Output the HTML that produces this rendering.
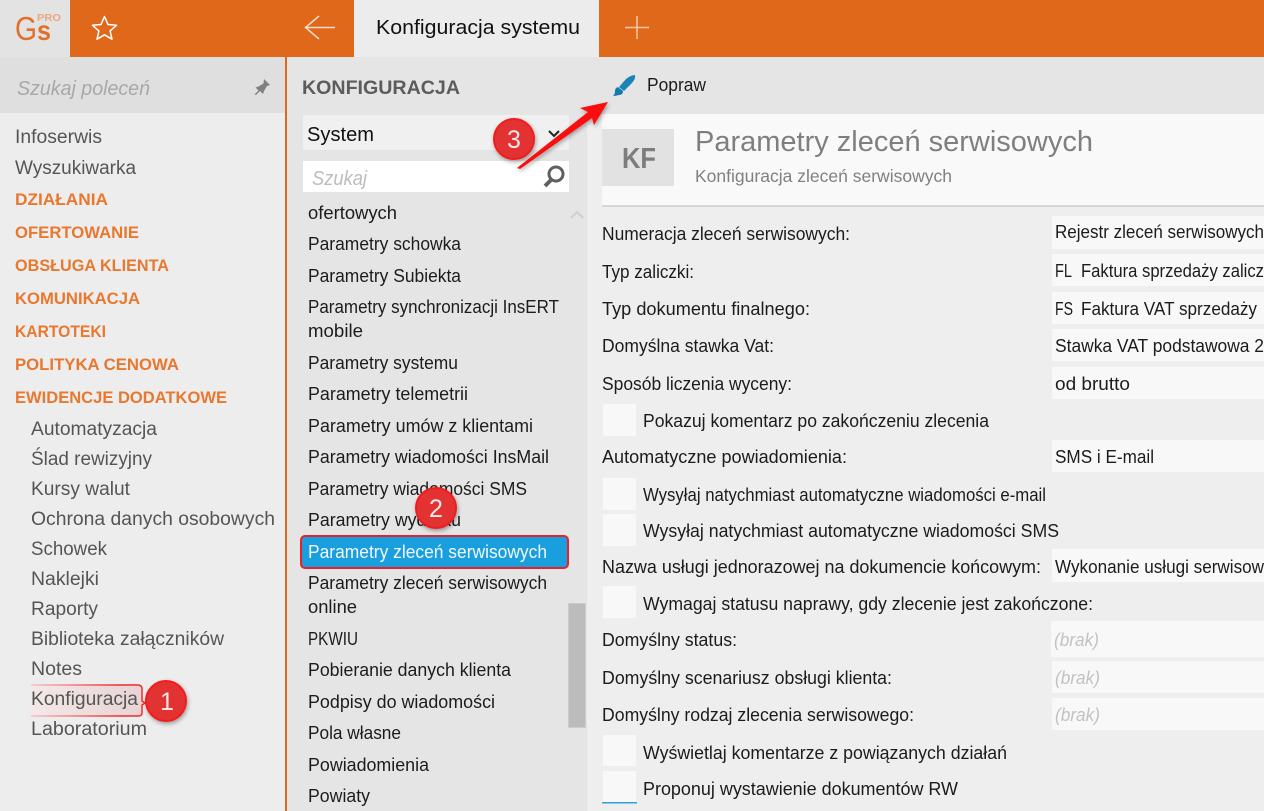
<!DOCTYPE html>
<html lang="pl"><head><meta charset="utf-8"><title>Konfiguracja systemu</title>
<style>
html,body{margin:0;padding:0;width:1264px;height:811px;overflow:hidden;background:#eee}
svg{display:block}
text{font-family:"Liberation Sans",sans-serif;font-size:18px;fill:#1a1a1a;white-space:pre}
.n{fill:#555;font-size:19px}
.o{fill:#e9782f;font-weight:bold;font-size:17px}
.m{fill:#1c1c1c}
.g{fill:#c2c2c2;font-style:italic}
</style></head><body>
<svg width="1264" height="811" viewBox="0 0 1264 811" xmlns="http://www.w3.org/2000/svg">
<defs>
<filter id="sh" x="-30%" y="-30%" width="160%" height="160%"><feDropShadow dx="1" dy="2" stdDeviation="2" flood-color="#000" flood-opacity=".35"/></filter>
<linearGradient id="hl" x1="0" x2="1" y1="0" y2="0"><stop offset="0" stop-color="#f4e8e8"/><stop offset="1" stop-color="#e8d3d3"/></linearGradient>
<linearGradient id="hs" gradientUnits="userSpaceOnUse" x1="31" x2="120" y1="0" y2="0"><stop offset="0" stop-color="#f6c4c4"/><stop offset="1" stop-color="#f02b2b"/></linearGradient>
</defs>
<rect width="1264" height="811" fill="#eeeeee"/>
<!-- top bar -->
<rect width="70" height="57" fill="#e3e3e3"/>
<rect x="70" width="284" height="57" fill="#e0681a"/>
<rect x="354" width="245" height="57" fill="#ececec"/>
<rect x="599" width="665" height="57" fill="#e0681a"/>
<text x="15" y="40" style="font-size:33px;fill:#e0702a" textLength="22" lengthAdjust="spacingAndGlyphs">G</text>
<text x="37" y="40" style="font-size:28px;font-weight:bold;fill:#e0702a" textLength="14" lengthAdjust="spacingAndGlyphs">s</text>
<text x="37" y="21" style="font-size:10.500px;fill:#eba77f;font-weight:bold" textLength="24" lengthAdjust="spacingAndGlyphs">PRO</text>
<path d="M104.500 16.500l3.500 8 8.500.8-6.400 5.600 1.900 8.300-7.500-4.400-7.500 4.400 1.900-8.300-6.400-5.600 8.500-.8z" fill="none" stroke="#fff" stroke-width="1.500" stroke-linejoin="round"/>
<path d="M335 27.500H306M319 16l-13.500 11.500L319 39" fill="none" stroke="#f8dcc9" stroke-width="1.500"/>
<path d="M637 16v23M625 27.500h24" stroke="#f6c7a8" stroke-width="1.500" fill="none"/>
<text x="376" y="34" style="font-size:20px;fill:#111" textLength="204" lengthAdjust="spacingAndGlyphs">Konfiguracja systemu</text>
<!-- left sidebar -->
<rect y="57" width="286" height="56" fill="#dfdfdf"/>
<rect y="113" width="286" height="698" fill="#ededed"/>
<rect x="285" y="57" width="2" height="754" fill="#e0681a"/>
<text x="17" y="95" style="font-size:20px;font-style:italic;fill:#a8a8a8" textLength="133" lengthAdjust="spacingAndGlyphs">Szukaj poleceń</text>
<path d="M264 79l6 6-3 1-3 5-1 3-3-3-4 4-1.500-.500 4-4-3-3 3-1 5-3z" fill="#808080"/>
<text class="n" x="15" y="143" textLength="87" lengthAdjust="spacingAndGlyphs">Infoserwis</text>
<text class="n" x="15" y="174" textLength="121" lengthAdjust="spacingAndGlyphs">Wyszukiwarka</text>
<text class="o" x="15" y="205" textLength="93" lengthAdjust="spacingAndGlyphs">DZIAŁANIA</text>
<text class="o" x="15" y="238" textLength="124" lengthAdjust="spacingAndGlyphs">OFERTOWANIE</text>
<text class="o" x="15" y="271" textLength="154" lengthAdjust="spacingAndGlyphs">OBSŁUGA KLIENTA</text>
<text class="o" x="15" y="304" textLength="125" lengthAdjust="spacingAndGlyphs">KOMUNIKACJA</text>
<text class="o" x="15" y="337" textLength="91" lengthAdjust="spacingAndGlyphs">KARTOTEKI</text>
<text class="o" x="15" y="370" textLength="164" lengthAdjust="spacingAndGlyphs">POLITYKA CENOWA</text>
<text class="o" x="15" y="403" textLength="212" lengthAdjust="spacingAndGlyphs">EWIDENCJE DODATKOWE</text>
<text class="n" x="31" y="435" textLength="126" lengthAdjust="spacingAndGlyphs">Automatyzacja</text>
<text class="n" x="31" y="465" textLength="121" lengthAdjust="spacingAndGlyphs">Ślad rewizyjny</text>
<text class="n" x="31" y="495" textLength="99" lengthAdjust="spacingAndGlyphs">Kursy walut</text>
<text class="n" x="31" y="525" textLength="244" lengthAdjust="spacingAndGlyphs">Ochrona danych osobowych</text>
<text class="n" x="31" y="555" textLength="76" lengthAdjust="spacingAndGlyphs">Schowek</text>
<text class="n" x="31" y="585" textLength="68" lengthAdjust="spacingAndGlyphs">Naklejki</text>
<text class="n" x="31" y="615" textLength="67" lengthAdjust="spacingAndGlyphs">Raporty</text>
<text class="n" x="31" y="645" textLength="193" lengthAdjust="spacingAndGlyphs">Biblioteka załączników</text>
<text class="n" x="31" y="675" textLength="51" lengthAdjust="spacingAndGlyphs">Notes</text>
<path d="M31 685H138q4 0 4 4v12l3 2-3 2v8q0 3-4 3H31z" fill="url(#hl)"/>
<path d="M31 685H138q4 0 4 4v12l3 2-3 2v8q0 3-4 3H31" fill="none" stroke="url(#hs)" stroke-width="1.500"/>
<text class="n" x="31" y="705" textLength="107" lengthAdjust="spacingAndGlyphs">Konfiguracja</text>
<text class="n" x="31" y="735" textLength="116" lengthAdjust="spacingAndGlyphs">Laboratorium</text>
<!-- middle panel -->
<rect x="287" y="57" width="300" height="754" fill="#e5e5e5"/>
<text x="302" y="94" style="font-size:19.500px;font-weight:bold;fill:#5c5c5c" textLength="158" lengthAdjust="spacingAndGlyphs">KONFIGURACJA</text>
<rect x="303" y="115" width="266" height="35" fill="#f0f0f0"/>
<text x="307" y="141" style="font-size:20px;fill:#111" textLength="67" lengthAdjust="spacingAndGlyphs">System</text>
<path d="M549 131l5 5 5-5" fill="none" stroke="#222" stroke-width="2"/>
<rect x="303" y="161" width="266" height="31" fill="#fff"/>
<text x="312" y="185" style="font-size:20px;font-style:italic;fill:#bdbdbd" textLength="55" lengthAdjust="spacingAndGlyphs">Szukaj</text>
<circle cx="556" cy="174" r="7" fill="none" stroke="#606060" stroke-width="3"/>
<path d="M551 180l-6 6" stroke="#606060" stroke-width="4"/>
<path d="M571 218l6-6 6 6" fill="none" stroke="#cfcfcf" stroke-width="2"/>
<rect x="568.500" y="603.500" width="17" height="124" fill="#bcbcbc" stroke="#cccccc" stroke-width="1"/>
<text class="m" x="308" y="219" textLength="89" lengthAdjust="spacingAndGlyphs">ofertowych</text>
<text class="m" x="308" y="250" textLength="153" lengthAdjust="spacingAndGlyphs">Parametry schowka</text>
<text class="m" x="308" y="282" textLength="153" lengthAdjust="spacingAndGlyphs">Parametry Subiekta</text>
<text class="m" x="308" y="313" textLength="251" lengthAdjust="spacingAndGlyphs">Parametry synchronizacji InsERT</text>
<text class="m" x="308" y="337" textLength="55" lengthAdjust="spacingAndGlyphs">mobile</text>
<text class="m" x="308" y="369" textLength="150" lengthAdjust="spacingAndGlyphs">Parametry systemu</text>
<text class="m" x="308" y="400" textLength="160" lengthAdjust="spacingAndGlyphs">Parametry telemetrii</text>
<text class="m" x="308" y="432" textLength="225" lengthAdjust="spacingAndGlyphs">Parametry umów z klientami</text>
<text class="m" x="308" y="463" textLength="241" lengthAdjust="spacingAndGlyphs">Parametry wiadomości InsMail</text>
<text class="m" x="308" y="495" textLength="219" lengthAdjust="spacingAndGlyphs">Parametry wiadomości SMS</text>
<text class="m" x="308" y="526" textLength="153" lengthAdjust="spacingAndGlyphs">Parametry wydruku</text>
<rect x="301" y="536" width="267" height="32" rx="4" fill="#1a9fde" stroke="#e8202a" stroke-width="2"/>
<text x="308" y="558" style="fill:#f2f8fc" textLength="239" lengthAdjust="spacingAndGlyphs">Parametry zleceń serwisowych</text>
<text class="m" x="308" y="589" textLength="239" lengthAdjust="spacingAndGlyphs">Parametry zleceń serwisowych</text>
<text class="m" x="308" y="613" textLength="49" lengthAdjust="spacingAndGlyphs">online</text>
<text class="m" x="308" y="645" textLength="50" lengthAdjust="spacingAndGlyphs">PKWIU</text>
<text class="m" x="308" y="676" textLength="203" lengthAdjust="spacingAndGlyphs">Pobieranie danych klienta</text>
<text class="m" x="308" y="708" textLength="187" lengthAdjust="spacingAndGlyphs">Podpisy do wiadomości</text>
<text class="m" x="308" y="739" textLength="93" lengthAdjust="spacingAndGlyphs">Pola własne</text>
<text class="m" x="308" y="771" textLength="121" lengthAdjust="spacingAndGlyphs">Powiadomienia</text>
<text class="m" x="308" y="802" textLength="62" lengthAdjust="spacingAndGlyphs">Powiaty</text>
<!-- right: toolbar -->
<rect x="587" y="57" width="677" height="57" fill="#e5e5e5"/>
<path d="M635 75q1 4-4 9l-7 7-5-4 7-8q5-4 9-4z" fill="#1a84b8"/>
<path d="M618 87l5 4q0 4-4 4-3 1-6 1 2-2 2-5 0-3 3-4z" fill="#127cb0"/>
<text class="m" x="647" y="91" textLength="59" lengthAdjust="spacingAndGlyphs">Popraw</text>
<rect x="602" y="114" width="662" height="92" fill="#f9f9f9"/>
<rect x="602" y="205" width="662" height="2" fill="#d6d6d6"/>
<rect x="602" y="129" width="72" height="57" fill="#e2e2e2"/>
<text x="622" y="168" style="font-size:29px;font-weight:bold;fill:#7d7d7d" textLength="34" lengthAdjust="spacingAndGlyphs">KF</text>
<text x="695" y="151" style="font-size:28.500px;fill:#7f7f7f" textLength="398" lengthAdjust="spacingAndGlyphs">Parametry zleceń serwisowych</text>
<text x="695" y="182" style="font-size:17.500px;fill:#808080" textLength="257" lengthAdjust="spacingAndGlyphs">Konfiguracja zleceń serwisowych</text>
<!-- form fields -->
<g fill="#f8f8f8">
<rect x="1052" y="216" width="212" height="33"/>
<rect x="1052" y="254" width="212" height="32"/>
<rect x="1052" y="292" width="212" height="32"/>
<rect x="1052" y="329" width="212" height="32"/>
<rect x="1052" y="367" width="212" height="32"/>
<rect x="1052" y="440" width="212" height="32"/>
<rect x="1052" y="549" width="212" height="33"/>
<rect x="1051" y="621" width="213" height="36"/>
<rect x="1052" y="661" width="212" height="32"/>
<rect x="1052" y="698" width="212" height="32"/>
<rect x="603" y="404" width="33" height="32"/>
<rect x="603" y="478" width="33" height="32"/>
<rect x="603" y="514" width="33" height="32"/>
<rect x="603" y="586" width="33" height="32"/>
<rect x="603" y="735" width="33" height="31"/>
<rect x="603" y="771" width="33" height="31"/>
</g>
<rect x="602" y="802" width="35" height="1.500" fill="#2aa3dc"/>
<text class="m" x="602" y="240" textLength="248" lengthAdjust="spacingAndGlyphs">Numeracja zleceń serwisowych:</text>
<text class="m" x="602" y="278" textLength="92" lengthAdjust="spacingAndGlyphs">Typ zaliczki:</text>
<text class="m" x="602" y="315" textLength="208" lengthAdjust="spacingAndGlyphs">Typ dokumentu finalnego:</text>
<text class="m" x="602" y="352" textLength="172" lengthAdjust="spacingAndGlyphs">Domyślna stawka Vat:</text>
<text class="m" x="602" y="390" textLength="190" lengthAdjust="spacingAndGlyphs">Sposób liczenia wyceny:</text>
<text class="m" x="643" y="427" textLength="346" lengthAdjust="spacingAndGlyphs">Pokazuj komentarz po zakończeniu zlecenia</text>
<text class="m" x="602" y="463" textLength="245" lengthAdjust="spacingAndGlyphs">Automatyczne powiadomienia:</text>
<text class="m" x="643" y="501" textLength="403" lengthAdjust="spacingAndGlyphs">Wysyłaj natychmiast automatyczne wiadomości e-mail</text>
<text class="m" x="643" y="537" textLength="416" lengthAdjust="spacingAndGlyphs">Wysyłaj natychmiast automatyczne wiadomości SMS</text>
<text class="m" x="602" y="573" textLength="439" lengthAdjust="spacingAndGlyphs">Nazwa usługi jednorazowej na dokumencie końcowym:</text>
<text class="m" x="643" y="610" textLength="450" lengthAdjust="spacingAndGlyphs">Wymagaj statusu naprawy, gdy zlecenie jest zakończone:</text>
<text class="m" x="602" y="646" textLength="135" lengthAdjust="spacingAndGlyphs">Domyślny status:</text>
<text class="m" x="602" y="684" textLength="290" lengthAdjust="spacingAndGlyphs">Domyślny scenariusz obsługi klienta:</text>
<text class="m" x="602" y="721" textLength="312" lengthAdjust="spacingAndGlyphs">Domyślny rodzaj zlecenia serwisowego:</text>
<text class="m" x="643" y="759" textLength="364" lengthAdjust="spacingAndGlyphs">Wyświetlaj komentarze z powiązanych działań</text>
<text class="m" x="643" y="795" textLength="315" lengthAdjust="spacingAndGlyphs">Proponuj wystawienie dokumentów RW</text>
<text class="m" x="1055" y="238" textLength="209" lengthAdjust="spacingAndGlyphs">Rejestr zleceń serwisowych</text>
<text class="m" x="1055" y="277" textLength="17" lengthAdjust="spacingAndGlyphs">FL</text>
<text class="m" x="1081" y="277" textLength="183" lengthAdjust="spacingAndGlyphs">Faktura sprzedaży zalicz</text>
<text class="m" x="1055" y="315" textLength="18" lengthAdjust="spacingAndGlyphs">FS</text>
<text class="m" x="1081" y="315" textLength="176" lengthAdjust="spacingAndGlyphs">Faktura VAT sprzedaży</text>
<text class="m" x="1055" y="352" textLength="209" lengthAdjust="spacingAndGlyphs">Stawka VAT podstawowa 2</text>
<text class="m" x="1055" y="390" textLength="75" lengthAdjust="spacingAndGlyphs">od brutto</text>
<text class="m" x="1055" y="463" textLength="99" lengthAdjust="spacingAndGlyphs">SMS i E-mail</text>
<text class="m" x="1055" y="573" textLength="209" lengthAdjust="spacingAndGlyphs">Wykonanie usługi serwisow</text>
<text class="g" x="1054" y="646" textLength="45" lengthAdjust="spacingAndGlyphs">(brak)</text>
<text class="g" x="1055" y="684" textLength="45" lengthAdjust="spacingAndGlyphs">(brak)</text>
<text class="g" x="1055" y="721" textLength="45" lengthAdjust="spacingAndGlyphs">(brak)</text>
<!-- callouts -->
<g filter="url(#sh)">
<path d="M517 168L588 112L580 108L608 102L594 125L592 118L520 169z" fill="#f90a0a"/>
<circle cx="166" cy="701" r="20" fill="#e23333" stroke="#f21c1c" stroke-width="2"/>
<circle cx="436" cy="508" r="20" fill="#e23333" stroke="#f21c1c" stroke-width="2"/>
<circle cx="514" cy="139" r="20" fill="#e23333" stroke="#f21c1c" stroke-width="2"/>
</g>
<text x="160" y="710" style="font-size:25px;fill:#fbe9e9" textLength="13">1</text>
<text x="429" y="517" style="font-size:25px;fill:#fbe9e9" textLength="14">2</text>
<text x="507" y="148" style="font-size:25px;fill:#fbe9e9" textLength="14">3</text>
</svg>
</body></html>
